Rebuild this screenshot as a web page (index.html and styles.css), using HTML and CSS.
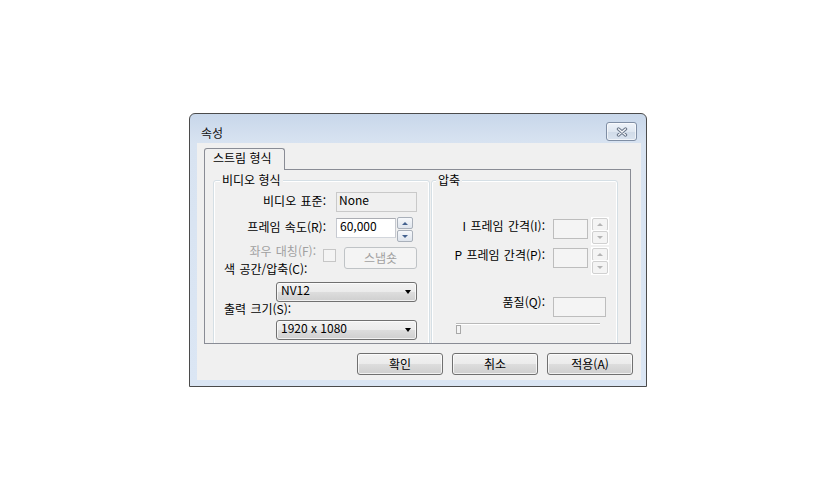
FILE: index.html
```html
<!DOCTYPE html>
<html lang="ko">
<head>
<meta charset="utf-8">
<title>속성</title>
<link rel="stylesheet" href="styles.css">
</head>
<body>
<div class="dialog">
  <div class="titlebar">
    <span class="title">속성</span>
    <button class="close" aria-label="닫기">
      <svg width="12" height="10" viewBox="0 0 12 10">
        <path d="M2.5 2 L9.5 8 M9.5 2 L2.5 8" stroke="#6b778a" stroke-width="3.4" stroke-linecap="round" fill="none"/>
        <path d="M2.5 2 L9.5 8 M9.5 2 L2.5 8" stroke="#f6f8fb" stroke-width="1.3" stroke-linecap="round" fill="none"/>
      </svg>
    </button>
  </div>
  <div class="client">
    <div class="tabs"><div class="tab">스트림 형식</div></div>
    <div class="panel">
      <fieldset class="group g1">
        <legend>비디오 형식</legend>
        <div class="row ra">
          <span class="lbl">비디오 표준:</span>
          <div class="field ro">None</div>
        </div>
        <div class="row rb">
          <span class="lbl">프레임 속도(R):</span>
          <div class="field edit">60,000</div>
          <div class="spin"><span class="up"></span><span class="down"></span></div>
        </div>
        <div class="row rc">
          <span class="lbl dim">좌우 대칭(F):</span>
          <span class="check"></span>
          <button class="btn small" disabled>스냅숏</button>
        </div>
        <div class="cap capd">색 공간/압축(C):</div>
        <div class="combo c1"><span>NV12</span><span class="arrow"></span></div>
        <div class="cap">출력 크기(S):</div>
        <div class="combo c2"><span>1920 x 1080</span><span class="arrow"></span></div>
      </fieldset>
      <fieldset class="group g2">
        <legend>압축</legend>
        <div class="row ri">
          <span class="lbl">I 프레임 간격(I):</span>
          <div class="field edit off w35"></div>
          <div class="spin off"><span class="up"></span><span class="down"></span></div>
        </div>
        <div class="row rp">
          <span class="lbl">P 프레임 간격(P):</span>
          <div class="field edit off w35"></div>
          <div class="spin off"><span class="up"></span><span class="down"></span></div>
        </div>
        <div class="row rq">
          <span class="lbl">품질(Q):</span>
          <div class="field edit off w53"></div>
        </div>
        <div class="slider"><div class="track"></div><div class="thumb"></div></div>
      </fieldset>
    </div>
    <div class="buttons">
      <button class="btn">확인</button>
      <button class="btn">취소</button>
      <button class="btn">적용(A)</button>
    </div>
  </div>
</div>
</body>
</html>
```
FILE: styles.css
```css
* { box-sizing: border-box; }
html, body { margin: 0; background: #fff; }
body {
  font-family: "Noto Sans CJK KR", "Noto Sans", sans-serif;
  font-size: 12px;
  line-height: 14px;
  color: #000;
}
button { font: inherit; color: inherit; margin: 0; padding: 0; }

.dialog {
  width: 458px;
  height: 274px;
  margin: 113px 0 0 189px;
  border: 1px solid #4b4b4b;
  border-radius: 6px 6px 0 0;
  background: linear-gradient(#c8d7ea, #d8e3f1 29px, #dbe6f4);
  padding: 0 5px 0 7px;
  display: flex;
  flex-direction: column;
}

.titlebar {
  height: 29px;
  display: flex;
  align-items: flex-start;
  justify-content: space-between;
  flex: none;
}
.title { margin: 12px 0 0 4px; color: #111; }
.close {
  width: 31px;
  height: 19px;
  margin: 8px 4px 0 0;
  border: 1px solid #7f8ea4;
  border-radius: 3px;
  background: linear-gradient(#eef3f9, #dfe7f1 50%, #d0dbe8 50%, #d9e3ef);
  box-shadow: inset 0 0 0 1px rgba(255,255,255,.6);
  display: flex;
  align-items: center;
  justify-content: center;
}

.client {
  width: 444px;
  height: 237px;
  flex: none;
  background: #f0f0f0;
  padding: 5px 8px 0 7px;
  display: flex;
  flex-direction: column;
}

.tabs { display: flex; height: 21px; flex: none; }
.tab {
  width: 81px;
  height: 22px;
  border: 1px solid #898c95;
  border-bottom: none;
  border-radius: 3px 3px 0 0;
  background: #f0f0f0;
  padding: 2px 0 0 8px;
  position: relative;
  z-index: 1;
  white-space: nowrap;
}

.panel {
  width: 427px;
  height: 175px;
  flex: none;
  border: 1px solid #898c95;
  background: #f0f0f0;
  overflow: hidden;
  display: flex;
  align-items: flex-start;
  gap: 1px;
  padding: 3px 0 0 8px;
}

.group {
  margin: 0;
  padding: 0;
  min-width: 0;
  height: 190px;
  border: 1px solid #d5dfe5;
  border-radius: 3px;
  box-shadow: inset 0 0 0 1px #fff;
  flex: none;
}
.group legend {
  padding: 0 2px;
  background: #f0f0f0;
  line-height: 14px;
}
.g1 { width: 217px; }
.g1 legend { margin-left: 6px; }
.g2 { width: 187px; }
.g2 legend { margin-left: 4px; }

.row { display: flex; align-items: flex-start; }
.lbl { flex: none; text-align: right; white-space: nowrap; word-spacing: 1px; }
.g1 .lbl { width: 112px; margin-right: 10px; }
.g2 .lbl { width: 113px; margin-right: 8px; }
.dim { color: #a0a0a0; }

.field { height: 20px; flex: none; padding: 0 0 0 3px; }
.ro {
  width: 81px;
  border: 1px solid #c9c9c9;
  background: #f0f0f0;
  padding-left: 2px;
}
.edit {
  width: 60px;
  border: 1px solid #abadb3;
  border-color: #abadb3 #c6c9d0 #d2d6dc #c6c9d0;
  background: #fff;
}
.edit.off { border: 1px solid #bdbdbd; background: #f4f4f4; }
.w35 { width: 35px; }
.w53 { width: 53px; }

.ra { margin-top: 5px; height: 20px; }
.ra .lbl { margin-top: 2px; }
.rb { margin-top: 5px; height: 25px; }
.rb .lbl { margin-top: 3px; }
.rb .edit { margin-top: 1px; }

.spin {
  flex: none;
  width: 16px;
  margin-left: 1px;
  display: flex;
  flex-direction: column;
  gap: 1px;
}
.spin span {
  height: 12px;
  border: 1px solid #a9b0ba;
  border-radius: 2px;
  background: linear-gradient(#f6f8fb, #dfe5ed);
  display: flex;
  align-items: center;
  justify-content: center;
}
.spin .up::before, .spin .down::before {
  content: "";
  width: 0;
  height: 0;
  border-left: 3px solid transparent;
  border-right: 3px solid transparent;
}
.spin .up::before { border-bottom: 3px solid #44628f; }
.spin .down::before { border-top: 3px solid #44628f; }
.spin.off { margin-left: 4px; gap: 0; box-shadow: 0 0 0 1px #fff; }
.spin.off span {
  height: 13px;
  border-color: #d0d0d0;
  background: #f4f4f4;
  box-shadow: 0 0 0 1px #fff;
}
.spin.off .up::before { border-bottom-color: #b4b4b4; }
.spin.off .down::before { border-top-color: #b4b4b4; }

.rc { margin-top: 5px; height: 22px; }
.rc .lbl { width: 102px; margin: -2px 7px 0 0; line-height: 12px; }
.check {
  flex: none;
  width: 13px;
  height: 13px;
  margin-top: 2px;
  border: 1px solid #c6c6c6;
  background: #f4f4f4;
}

.btn {
  width: 86px;
  height: 22px;
  flex: none;
  border: 1px solid #707070;
  border-radius: 3px;
  background: linear-gradient(#f2f2f2, #ebebeb 50%, #dddddd 50%, #cfcfcf);
  box-shadow: inset 0 0 0 1px rgba(255,255,255,.7);
  text-align: center;
  line-height: 20px;
}
.btn.small {
  width: 73px;
  margin-left: 8px;
  border-color: #bfc3c6;
  background: #f4f4f4;
  box-shadow: none;
  color: #a0a0a0;
}

.cap { padding-left: 10px; white-space: nowrap; word-spacing: 1px; }
.capd { margin-top: -6px; line-height: 12px; }

.combo {
  width: 141px;
  height: 20px;
  margin-left: 62px;
  border: 1px solid #707070;
  border-radius: 3px;
  background: linear-gradient(#f2f2f2, #ebebeb 50%, #dddddd 50%, #cfcfcf);
  box-shadow: inset 0 0 0 1px rgba(255,255,255,.7);
  padding: 0 5px 0 4px;
  display: flex;
  align-items: flex-start;
  justify-content: space-between;
}
.combo .arrow {
  align-self: center;
  width: 0;
  height: 0;
  border-left: 3.5px solid transparent;
  border-right: 3.5px solid transparent;
  border-top: 4px solid #000;
}
.c1 { margin-top: 7px; }
.c2 { margin-top: 4px; }

.ri { margin-top: 31px; height: 26px; }
.ri .lbl { margin-top: 1px; }
.ri .edit { margin-top: 1px; }
.rp { margin-top: 4px; height: 26px; }
.rq { margin-top: 23px; height: 20px; }
.rq .lbl { margin-top: -2px; }

.slider {
  position: relative;
  width: 144px;
  height: 10px;
  margin: 6px 0 0 24px;
}
.track {
  margin-top: 4px;
  height: 2px;
  border-top: 1px solid #b9b9b9;
  border-bottom: 1px solid #fff;
}
.thumb {
  position: absolute;
  left: 0;
  top: 2px;
  width: 5px;
  height: 9px;
  border: 1px solid #a8a8a8;
  background: #f4f4f4;
}

.buttons {
  display: flex;
  justify-content: flex-end;
  gap: 9px;
  margin-top: 9px;
}
```
